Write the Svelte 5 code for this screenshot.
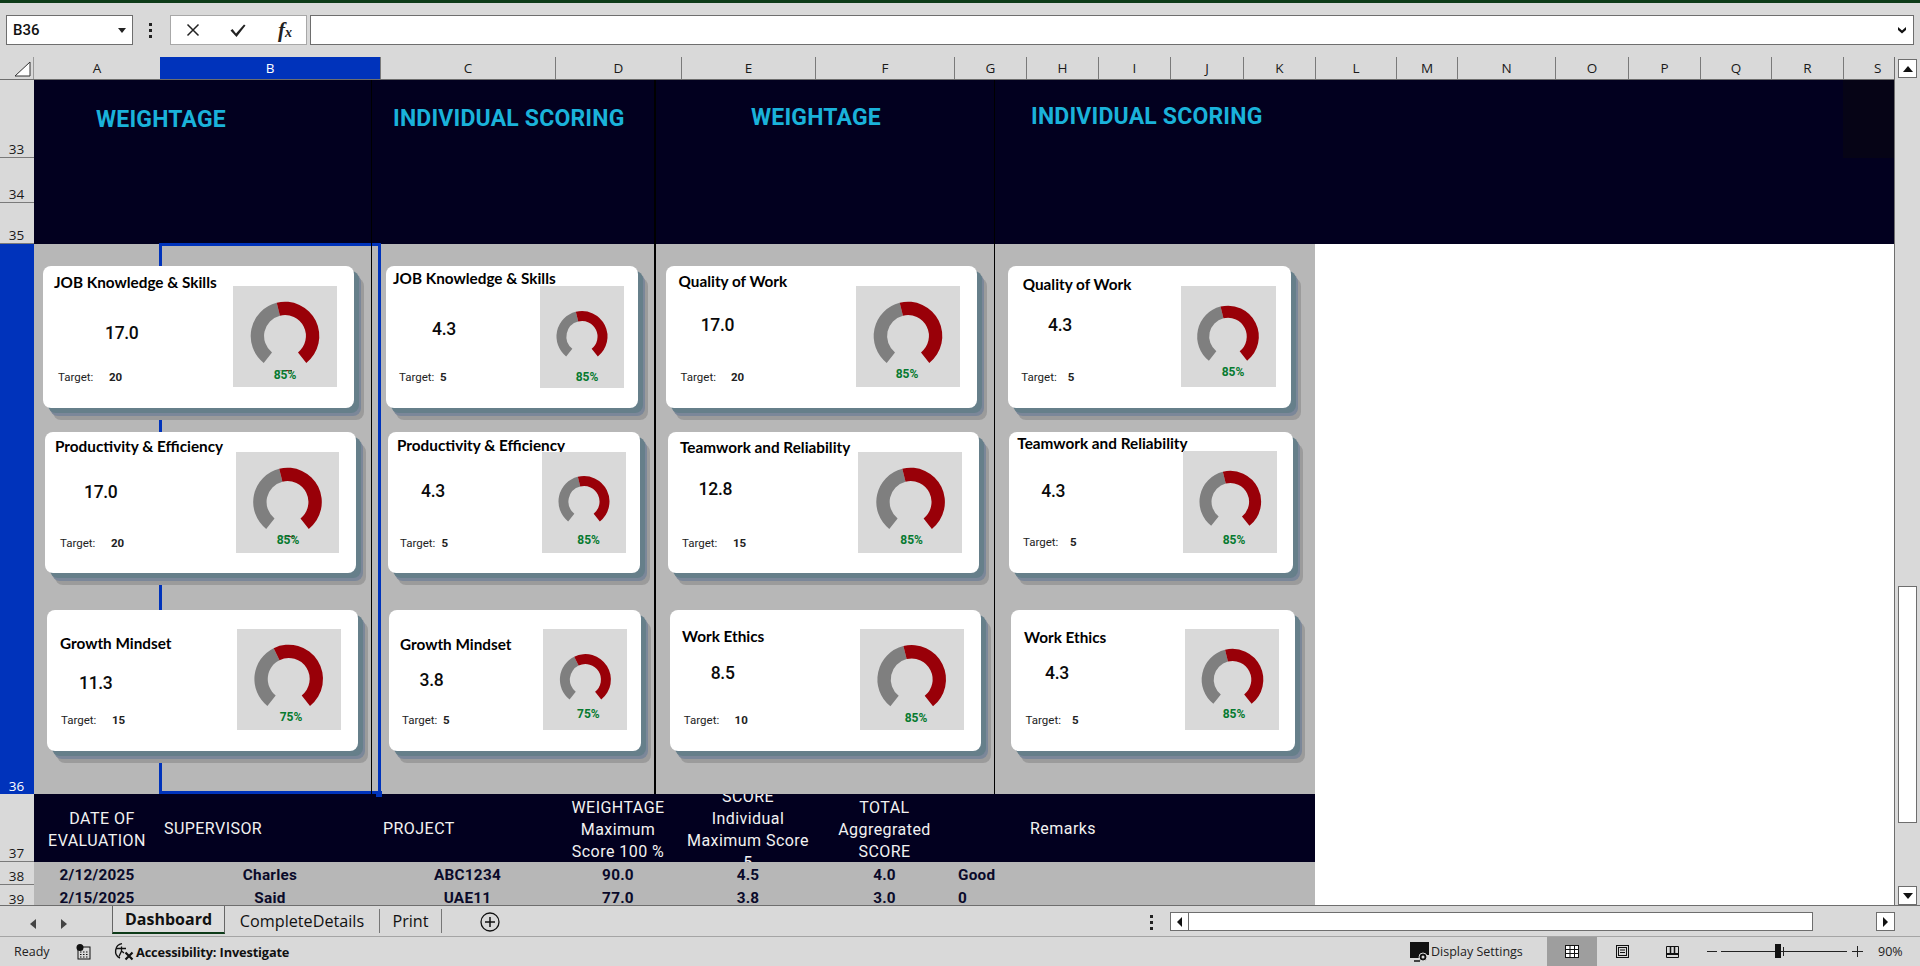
<script>
  const ox = 34, oy = 80;
  const letters = 'ABCDEFGHIJKLMNOPQRS'.split('');
  const rowHeads = [['33','r33'],['34','r34'],['35','r35'],['36','r36 sel'],['37','r37'],['38','r38'],['39','r39']];

  function pt(cx, cy, r, deg) {
    const a = (deg - 90) * Math.PI / 180;
    return [cx + r * Math.cos(a), cy + r * Math.sin(a)];
  }
  function arc(cx, cy, R, r, a0, a1) {
    const [x0, y0] = pt(cx, cy, R, a0), [x1, y1] = pt(cx, cy, R, a1);
    const [x2, y2] = pt(cx, cy, r, a1), [x3, y3] = pt(cx, cy, r, a0);
    const large = a1 - a0 > 180 ? 1 : 0;
    const f = (n) => n.toFixed(2);
    return `M${f(x0)} ${f(y0)}A${R} ${R} 0 ${large} 1 ${f(x1)} ${f(y1)}L${f(x2)} ${f(y2)}A${r} ${r} 0 ${large} 0 ${f(x3)} ${f(y3)}Z`;
  }

  // x, y, w, h: card | title | value | target | chart box | donut | percent
  const cards = [
    { x:43,  y:266, w:311, h:142, t:'JOB Knowledge & Skills', tx:54,  ty:282, v:'17.0', vx:105, vy:333, lx:58,  ly:377, n:'20', nx:109, bx:233, by:286, bw:104, bh:101, dx:285, dy:336, R:34.3, p:'85%', px:285, py:375, tick:true },
    { x:45,  y:432, w:311, h:141, t:'Productivity & Efficiency', tx:55, ty:446, v:'17.0', vx:84, vy:492, lx:60, ly:543, n:'20', nx:111, bx:236, by:452, bw:103, bh:101, dx:287.5, dy:502, R:34.3, p:'85%', px:288, py:540, tick:true },
    { x:47,  y:610, w:311, h:141, t:'Growth Mindset', tx:60, ty:643, v:'11.3', vx:79, vy:683, lx:61, ly:720, n:'15', nx:112, bx:237, by:629, bw:104, bh:101, dx:288.7, dy:679, R:34.3, p:'75%', px:291, py:717, s:-26 },
    { x:386, y:266, w:252, h:142, t:'JOB Knowledge & Skills', tx:393, ty:278, v:'4.3', vx:432, vy:329, lx:399, ly:377, n:'5', nx:440, bx:540, by:286, bw:84, bh:102, dx:582, dy:336.5, R:25.5, p:'85%', px:587, py:377 },
    { x:388, y:432, w:252, h:141, t:'Productivity & Efficiency', tx:397, ty:445, v:'4.3', vx:421, vy:491, lx:400, ly:543, n:'5', nx:441.5, bx:542, by:452, bw:84, bh:101, dx:584, dy:501.5, R:25.5, p:'85%', px:588.6, py:540 },
    { x:389, y:610, w:252, h:141, t:'Growth Mindset', tx:400, ty:644, v:'3.8', vx:419.6, vy:680, lx:402, ly:720, n:'5', nx:443, bx:543, by:629, bw:84, bh:101, dx:585.4, dy:679.6, R:25.5, p:'75%', px:588.4, py:714, s:-26 },
    { x:666, y:266, w:311, h:142, t:'Quality of Work', tx:678.6, ty:281, v:'17.0', vx:700.7, vy:325, lx:680.6, ly:377, n:'20', nx:731, bx:856, by:286, bw:104, bh:101, dx:908, dy:336, R:34.3, p:'85%', px:907, py:374 },
    { x:668, y:432, w:311, h:141, t:'Teamwork and Reliability', tx:680, ty:447, v:'12.8', vx:698.6, vy:489, lx:682, ly:543, n:'15', nx:733, bx:858, by:452, bw:104, bh:101, dx:910.6, dy:502, R:34.3, p:'85%', px:911.6, py:540 },
    { x:670, y:610, w:311, h:141, t:'Work Ethics', tx:682, ty:636, v:'8.5', vx:710.7, vy:673, lx:683.8, ly:720, n:'10', nx:734.6, bx:860, by:629, bw:104, bh:101, dx:911.7, dy:679.4, R:34.3, p:'85%', px:916, py:718 },
    { x:1008, y:266, w:283, h:142, t:'Quality of Work', tx:1022.7, ty:284, v:'4.3', vx:1048, vy:325, lx:1021.3, ly:377, n:'5', nx:1067.7, bx:1181, by:286, bw:95, bh:101, dx:1228, dy:336.5, R:30.8, p:'85%', px:1233, py:372 },
    { x:1009, y:432, w:284, h:141, t:'Teamwork and Reliability', tx:1017.3, ty:443, v:'4.3', vx:1041.3, vy:491, lx:1023, ly:542, n:'5', nx:1070, bx:1183, by:451, bw:94, bh:102, dx:1230.3, dy:501.7, R:30.8, p:'85%', px:1234, py:540 },
    { x:1011, y:610, w:284, h:141, t:'Work Ethics', tx:1024, ty:637, v:'4.3', vx:1045, vy:673, lx:1025.6, ly:720, n:'5', nx:1072, bx:1185, by:629, bw:94, bh:101, dx:1232.5, dy:679.7, R:30.8, p:'85%', px:1234, py:714 }
  ];
  const at = (c, x, y) => `left:${x - c.x}px;top:${y - c.y}px`;

  const heads = [
    { txt: 'WEIGHTAGE', x: 96, y: 120 },
    { txt: 'INDIVIDUAL SCORING', x: 393, y: 119 },
    { txt: 'WEIGHTAGE', x: 751, y: 118 },
    { txt: 'INDIVIDUAL SCORING', x: 1031, y: 117 }
  ];
  const rules = [370.5, 654, 993.5];
  const rows = [
    ['2/12/2025','Charles','ABC1234','90.0','4.5','4.0','Good'],
    ['2/15/2025','Said','UAE11','77.0','3.8','3.0','0']
  ];
</script>

<div class="app">
  <div class="topline"></div>

  <div class="fbar">
    <div class="namebox"><span>B36</span><svg width="8" height="5" viewBox="0 0 8 5"><path d="M0 0h8L4 5z" fill="#222"/></svg></div>
    <div class="dots fdots"><i></i><i></i><i></i></div>
    <div class="fxgroup">
      <svg class="fxi" width="16" height="16" viewBox="0 0 16 16"><path d="M2.5 2.5l11 11M13.5 2.5l-11 11" stroke="#222" stroke-width="1.5" fill="none"/></svg>
      <svg class="fxi" width="18" height="16" viewBox="0 0 18 16"><path d="M1.5 8.5l2-1.5 3.5 4.5L15 2.5l1.5 1L7.5 15z" fill="#222"/></svg>
      <span class="fx">f<small>x</small></span>
    </div>
    <div class="formula"><svg width="10" height="8" viewBox="0 0 10 8"><path d="M1 1l4 3.5L9 1v3L5 7.5 1 4z" fill="#111"/></svg></div>
  </div>

  <div class="middle">
    <div class="sheet">
      <div class="colhead">
        <div class="corner"><svg width="17" height="16" viewBox="0 0 17 16"><path d="M1 15L16 1v14z" fill="#fff" stroke="#333" stroke-width="1"/></svg></div>
        <div class="cols">
          {#each letters as l}
            <div class="col" class:active={l === 'B'}>{l}</div>
          {/each}
        </div>
      </div>

      <div class="grid">
        <div class="rowheads">
          {#each rowHeads as [n, cls]}
            <div class="rh {cls}">{n}</div>
          {/each}
        </div>

        <div class="body">
          <div class="band"><div class="dim"></div></div>
          <div class="canvasrow"><div class="graycell"><div class="selection"></div></div></div>
          <div class="thead">
            <div class="th c date"><span class="sh">DATE OF</span><span>EVALUATION</span></div>
            <div class="th l sup">SUPERVISOR</div>
            <div class="th l proj">PROJECT</div>
            <div class="th c">WEIGHTAGE<br>Maximum<br>Score 100 %</div>
            <div class="th c">SCORE<br>Individual<br>Maximum Score<br>5</div>
            <div class="th c">TOTAL<br>Aggregrated<br>SCORE</div>
            <div class="th"></div>
            <div class="th l rem">Remarks</div>
          </div>
          {#each rows as r}
            <div class="trow">
              {#each r as cell, i}
                <div class="td" class:left={i === 6}>{cell}</div>
              {/each}
            </div>
          {/each}

          {#each rules as x}
            <div class="rule" style="left:{x - ox}px"></div>
          {/each}
          <div class="handle"></div>

          {#each heads as h}
            <div class="bandtitle" style="left:{h.x - ox}px;top:{h.y - oy}px">{h.txt}</div>
          {/each}

          {#each cards as c}
            <div class="card" style="left:{c.x - ox}px;top:{c.y - oy}px;width:{c.w}px;height:{c.h}px">
              <div class="title" style={at(c, c.tx, c.ty)}>{c.t}</div>
              <div class="value" style={at(c, c.vx, c.vy)}>{c.v}</div>
              <div class="tlabel" style={at(c, c.lx, c.ly)}>Target:</div>
              <div class="tnum" style={at(c, c.nx, c.ly)}>{c.n}</div>
              <div class="chart" style="{at(c, c.bx, c.by)};width:{c.bw}px;height:{c.bh}px">
                <svg width={c.bw} height={c.bh} viewBox="{c.bx} {c.by} {c.bw} {c.bh}">
                  <path d={arc(c.dx, c.dy, c.R, c.R * 0.61, -141.6, c.s ?? -14)} fill="#7f7f7f"/>
                  <path d={arc(c.dx, c.dy, c.R, c.R * 0.61, c.s ?? -14, 141.6)} fill="#990008"/>
                  {#if c.tick}
                    <path d="M{c.dx - 8} {c.dy + 34.6}h8" stroke="#999" stroke-width="1"/>
                    <path d="M{c.dx} {c.dy + 34.6}h7" stroke="#990008" stroke-width="1"/>
                  {/if}
                </svg>
                <div class="pct" style="left:{c.px - c.bx}px;top:{c.py - c.by}px">{c.p}</div>
              </div>
            </div>
          {/each}
        </div>
      </div>
    </div>

    <div class="vscroll">
      <div class="sbtn up"><svg width="10" height="6" viewBox="0 0 10 6"><path d="M0 6L5 0l5 6z" fill="#111"/></svg></div>
      <div class="vtrack"><div class="vthumb"></div></div>
      <div class="sbtn down"><svg width="10" height="6" viewBox="0 0 10 6"><path d="M0 0l5 6 5-6z" fill="#111"/></svg></div>
    </div>
  </div>

  <div class="tabs">
    <div class="nav">
      <svg width="6" height="10" viewBox="0 0 6 10"><path d="M6 0L0 5l6 5z" fill="#444"/></svg>
      <svg width="6" height="10" viewBox="0 0 6 10"><path d="M0 0l6 5-6 5z" fill="#444"/></svg>
    </div>
    <div class="tab on">Dashboard</div>
    <div class="tab t2">CompleteDetails</div>
    <div class="tab t3">Print</div>
    <svg class="addtab" width="20" height="20" viewBox="0 0 20 20"><circle cx="10" cy="10" r="9" fill="none" stroke="#111" stroke-width="1.3"/><path d="M10 5v10M5 10h10" stroke="#111" stroke-width="1.5"/></svg>
    <div class="tabright">
      <div class="dots"><i></i><i></i><i></i></div>
      <div class="hscroll">
        <div class="hbtn"><svg width="5" height="10" viewBox="0 0 5 10"><path d="M5 0L0 5l5 5z" fill="#111"/></svg></div>
      </div>
      <div class="hbtn solo"><svg width="5" height="10" viewBox="0 0 5 10"><path d="M0 0l5 5-5 5z" fill="#111"/></svg></div>
    </div>
  </div>

  <div class="status">
    <span class="ready">Ready</span>
    <svg class="macro" width="15" height="16" viewBox="0 0 15 16"><rect x="2" y="3" width="12" height="12" fill="none" stroke="#111"/><circle cx="4" cy="3.5" r="3.5" fill="#111"/><path d="M4 8h1.5M7 8h1.5M10 8h1.5M4 10.5h1.5M7 10.5h1.5M10 10.5h1.5M4 13h1.5M7 13h1.5M10 13h1.5" stroke="#111"/></svg>
    <svg class="a11y" width="22" height="19" viewBox="0 0 22 19"><path d="M9 1.6a7.6 7.6 0 0 0-2 14.4" fill="none" stroke="#111" stroke-width="1.4"/><path d="M3 6.5h10M8.5 4.5v4.5L6 14.5M8.5 9l2.5 2" fill="none" stroke="#111" stroke-width="1.3"/><path d="M12.5 10.5l7 7M19.5 10.5l-7 7" stroke="#111" stroke-width="2.2"/></svg>
    <span class="acc">Accessibility: Investigate</span>
    <div class="sright">
      <svg class="disp" width="20" height="20" viewBox="0 0 20 20"><path d="M0 0h19v13h-5l-1 1h-3l-1 2H0z" fill="#111"/><path d="M4 19h6" stroke="#111" stroke-width="1.5"/><circle cx="13" cy="15" r="4" fill="#111" stroke="#d9d9d9"/><circle cx="13" cy="15" r="1.5" fill="#d9d9d9"/></svg>
      <span class="dtext">Display Settings</span>
      <div class="view on"><svg width="14" height="13" viewBox="0 0 14 13"><rect x=".5" y=".5" width="13" height="12" fill="#fff" stroke="#111"/><path d="M.5 4.5h13M.5 8.5h13M5 .5v12M9.5 .5v12" stroke="#111"/></svg></div>
      <div class="view"><svg width="13" height="13" viewBox="0 0 13 13"><rect x=".5" y=".5" width="12" height="12" fill="none" stroke="#111" stroke-width="1"/><rect x="2.5" y="2.5" width="8" height="8" fill="none" stroke="#111"/><path d="M4 5h5M4 7.5h5" stroke="#111"/></svg></div>
      <div class="view"><svg width="13" height="12" viewBox="0 0 13 12"><path d="M.5.5h12v11H.5z" fill="none" stroke="#111"/><path d="M.5 8h12" stroke="#111" stroke-width="2"/><path d="M4.5.5v7M8.5.5v7" stroke="#111" stroke-width="1.5"/></svg></div>
      <div class="zoomminus"></div>
      <div class="slider"><div class="thumb"></div><div class="stick"></div></div>
      <svg class="zoomplus" width="11" height="11" viewBox="0 0 11 11"><path d="M5.5 0v11M0 5.5h11" stroke="#222" stroke-width="1"/></svg>
      <span class="zoomv">90%</span>
    </div>
  </div>
</div>

<style>
  :global(body) { margin: 0; background: #d9d9d9; }
  .app {
    width: 1920px; height: 966px; overflow: hidden; display: flex; flex-direction: column;
    background: #d9d9d9; font-family: "Open Sans", "Noto Sans", sans-serif; color: #222;
  }
  .topline { height: 3px; background: #0d3b18; }

  /* formula bar */
  .fbar { height: 54px; flex: none; display: flex; align-items: flex-start; padding: 12px 6px 0 6px; box-sizing: border-box; }
  .namebox {
    width: 127px; height: 30px; box-sizing: border-box; background: #fff; border: 1px solid #6e6e6e;
    display: flex; align-items: center; justify-content: space-between; padding: 0 6px 0 6px;
    font: 500 15px Roboto, sans-serif; color: #111;
  }
  .dots { display: flex; flex-direction: column; gap: 3px; }
  .dots i { display: block; width: 3px; height: 3px; background: #222; }
  .fdots { margin: 8px 18px 0 16px; }
  .fxgroup {
    width: 137px; height: 30px; box-sizing: border-box; background: #fff; border: 1px solid #a8a8a8;
    display: flex; align-items: center; padding-left: 14px; gap: 28px; margin-right: 3px;
  }
  .fxi { flex: none; }
  .fx { font: italic bold 21px "Liberation Serif", serif; color: #222; margin-left: 3px; }
  .fx small { font-size: 14px; }
  .formula {
    flex: 1; height: 30px; box-sizing: border-box; background: #fff; border: 1px solid #6e6e6e;
    display: flex; align-items: center; justify-content: flex-end; padding-right: 6px;
  }

  /* sheet */
  .middle { flex: none; height: 849px; display: flex; border-bottom: 1px solid #6e6e6e; box-sizing: border-box; }
  .sheet { width: 1894px; display: flex; flex-direction: column; }
  .colhead { height: 23px; flex: none; box-sizing: border-box; display: flex; border-bottom: 1px solid #6e6e6e; }
  .corner { width: 34px; display: flex; align-items: flex-end; justify-content: flex-end; padding: 0 2px 2px 0; box-sizing: border-box; border-right: 1px solid #9a9a9a; }
  .cols {
    display: grid; flex: 1;
    grid-template-columns: 126px 220px 175px 126px 134px 139px 72px 72px 72px 73px 72px 81px 61px 98px 73px 72px 71px 72px 51px;
  }
  .col {
    display: flex; align-items: center; justify-content: center; border-left: 1px solid #7a7a7a;
    font-size: 13.5px; color: #1a1a1a; box-sizing: border-box;
  }
  .col:first-child { border-left: 0; }
  .col:last-child { justify-content: flex-start; padding-left: 30px; }
  .col.active { background: #0033bb; color: #fff; border-left: 0; }

  .grid { flex: 1; display: flex; min-height: 0; }
  .rowheads { width: 34px; flex: none; display: flex; flex-direction: column; }
  .rh {
    box-sizing: border-box; flex: none; display: flex; align-items: flex-end; justify-content: center;
    font-size: 13.5px; line-height: 16px; color: #1a1a1a; border-bottom: 1px solid #7a7a7a; padding-right: 1px;
  }
  .rh.sel { background: #0033bb; color: #fff; border-bottom: 0; }
  .r33 { height: 78px; } .r34 { height: 45px; } .r35 { height: 41px; }
  .r36 { height: 550px; } .r37 { height: 68px; } .r38 { height: 23px; } .r39 { height: 22px; border-bottom: 0; }

  .body { flex: 1; position: relative; overflow: hidden; display: flex; flex-direction: column; background: #fff; }
  .band { height: 164px; flex: none; background: #02001f; position: relative; }
  .dim { position: absolute; right: 0; top: 0; width: 51px; height: 78px; background: #060416; }
  .canvasrow { height: 550px; flex: none; display: flex; }
  .graycell { width: 1281px; height: 100%; background: #b7b7b7; position: relative; }
  .selection {
    position: absolute; left: 125px; top: -1px; width: 222px; height: 551px; box-sizing: border-box;
    border: 3px solid #0033bb;
  }
  .handle { position: absolute; left: 342px; top: 711px; width: 6px; height: 6px; background: #0033bb; }
  .rule { position: absolute; top: 0; width: 1.5px; height: 714px; background: #000; }

  .thead, .trow {
    width: 1281px; flex: none; display: grid;
    grid-template-columns: 126px 220px 175px 126px 134px 139px 72px 223px;
  }
  .thead { height: 68px; background: #02001f; overflow: hidden; }
  .th {
    height: 68px; display: flex; flex-direction: column; justify-content: center; overflow: hidden;
    font: 400 16px/22px Roboto, sans-serif; letter-spacing: .45px; color: #f2f2f2; white-space: nowrap;
    box-sizing: border-box; padding-top: 2px;
  }
  .th.c { display: block; text-align: center; padding-top: 3px; }
  .th.c:nth-child(5) { padding-top: 0; margin-top: -8px; height: 76px; }
  .th.date { padding-top: 14px; }
  .th.date span { display: block; }
  .th.date .sh { padding-left: 10px; }
  .th.l { padding-left: 4px; }
  .th.proj { padding-left: 3px; }
  .th.rem { padding-left: 4px; }

  .trow { background: #b7b7b7; height: 23px; }
  .td {
    height: 23px; text-align: center; font: 700 15.3px/27px Roboto, sans-serif; letter-spacing: .25px; color: #0a0a2a; white-space: nowrap;
  }
  .td.left { text-align: left; padding-left: 4px; }

  .bandtitle {
    position: absolute; transform: translateY(-50%); white-space: nowrap;
    font: 700 23px/28px Roboto, sans-serif; color: #1ab2da; letter-spacing: .18px;
  }

  /* floating shape cards */
  .card {
    position: absolute; background: #fff; border-radius: 8px;
    box-shadow: 5px 5px 0 0 #667f8a, 7px 8px 0 0 #7b8799, 10px 12px 0 0 #9b9b9b;
  }
  .title, .value, .tlabel, .tnum { position: absolute; transform: translateY(-50%); white-space: nowrap; }
  .title { font: 700 15.3px/20px Lato, sans-serif; color: #000; }
  .value { font: 500 17.5px/20px Roboto, sans-serif; color: #0a0a0a; letter-spacing: -.3px; }
  .tlabel { font: 400 11.5px/14px Roboto, sans-serif; color: #222; }
  .tnum { font: 700 11.5px/14px Roboto, sans-serif; color: #222; }
  .chart { position: absolute; background: #d9d9d9; }
  .chart svg { display: block; }
  .pct {
    position: absolute; transform: translate(-50%, -50%);
    font: 700 12px/14px Roboto, sans-serif; color: #067a30;
  }

  /* vertical scrollbar */
  .vscroll { width: 26px; flex: none; box-sizing: border-box; border-left: 1px solid #6e6e6e; display: flex; flex-direction: column; padding: 2px 3px 0 3px; }
  .sbtn { height: 19px; width: 19px; flex: none; box-sizing: border-box; background: #fff; border: 1px solid #6e6e6e; display: flex; align-items: center; justify-content: center; }
  .vtrack { flex: 1; position: relative; }
  .vthumb { position: absolute; left: 0; top: 508px; width: 19px; height: 237px; box-sizing: border-box; background: #fff; border: 1px solid #6e6e6e; }

  /* tabs */
  .tabs { height: 31px; flex: none; box-sizing: border-box; display: flex; align-items: flex-start; border-bottom: 1px solid #a5a5a5; font-size: 16.2px; color: #111; }
  .nav { width: 112px; height: 30px; box-sizing: border-box; display: flex; align-items: center; gap: 25px; padding: 5px 0 0 30px; }
  .tab { height: 28px; display: flex; align-items: center; justify-content: center; box-sizing: border-box; }
  .tab.on { width: 113px; height: 28px; background: #dedede; font-weight: 700; font-size: 16px; border-left: 1px solid #666; border-right: 1px solid #666; border-bottom: 2px solid #0d3b18; }
  .tab.t2 { width: 155px; height: 24px; margin-top: 3px; border-right: 1px solid #777; }
  .tab.t3 { width: 62px; height: 24px; margin-top: 3px; border-right: 1px solid #777; }
  .addtab { margin: 6px 0 0 38px; }
  .tabright { margin-left: auto; display: flex; align-items: flex-start; padding: 6px 25px 0 0; }
  .tabright .dots { margin: 3px 17px 0 0; }
  .hscroll { width: 643px; height: 19px; box-sizing: border-box; background: #fff; border: 1px solid #6e6e6e; }
  .hbtn { width: 18px; height: 17px; box-sizing: border-box; background: #fff; border-right: 1px solid #6e6e6e; display: flex; align-items: center; justify-content: center; }
  .hbtn.solo { width: 19px; height: 19px; margin-left: 63px; border: 1px solid #6e6e6e; }

  /* status bar */
  .status { flex: 1; display: flex; align-items: center; font-size: 12.5px; color: #222; padding-left: 14px; }
  .ready { width: 62px; }
  .macro { margin-right: 22px; }
  .a11y { margin-right: 1px; }
  .acc { font-weight: 700; font-size: 12.8px; letter-spacing: -.15px; color: #111; white-space: nowrap; }
  .sright { margin-left: auto; display: flex; align-items: center; height: 100%; padding-right: 18px; }
  .disp { margin-right: 1px; }
  .dtext { width: 116px; }
  .view { width: 50px; height: 100%; display: flex; align-items: center; justify-content: center; }
  .view.on { background: #9e9e9e; }
  .zoomminus { width: 10px; height: 1px; background: #222; margin: 0 4px 0 10px; }
  .slider { width: 126px; height: 1px; background: #222; position: relative; }
  .thumb { position: absolute; left: 54px; top: -7px; width: 6px; height: 14px; background: #111; }
  .stick { position: absolute; left: 62px; top: -4px; width: 1px; height: 9px; background: #222; }
  .zoomplus { margin: 0 15px 0 5px; }
  .zoomv { width: 24px; white-space: nowrap; }
</style>
